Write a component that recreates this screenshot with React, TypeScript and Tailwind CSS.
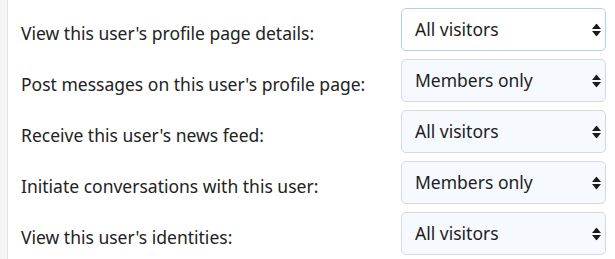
import { useState } from "react";

interface IPrivacyRow {
  label: string;
  value: string;
  focused?: boolean;
}

const options = ["All visitors", "Members only", "Followed members only", "Nobody"];

const rows: IPrivacyRow[] = [
  { label: "View this user's profile page details:", value: "All visitors", focused: true },
  { label: "Post messages on this user's profile page:", value: "Members only" },
  { label: "Receive this user's news feed:", value: "All visitors" },
  { label: "Initiate conversations with this user:", value: "Members only" },
  { label: "View this user's identities:", value: "All visitors" },
];

// bootstrap style up/down caret
const arrows = (
  <svg width={9} height={13} viewBox="0 0 9 13" className="pointer-events-none absolute right-[5px] top-1/2 -translate-y-1/2">
    <path d="M4.5 0 L9 5.5 L0 5.5 Z" fill="#1b1b1b" />
    <path d="M0 7.5 L9 7.5 L4.5 13 Z" fill="#1b1b1b" />
  </svg>
);

function PrivacySelect({ value, focused = false }: { value: string; focused?: boolean }) {
  const [selected, setSelected] = useState(value);
  return (
    <div className="relative w-[205px] shrink-0">
      <select
        value={selected}
        onChange={(e) => setSelected(e.currentTarget.value)}
        className={`h-[43px] w-full appearance-none rounded-[5px] border pl-[13px] pr-6 text-[17.5px] text-[#1d1d1d] outline-none ${
          focused ? "border-[#a9d2f3] bg-white" : "border-[#d6dade] bg-[#f6f9fd]"
        }`}
      >
        {options.map((o) => (
          <option key={o} value={o}>
            {o}
          </option>
        ))}
      </select>
      {arrows}
    </div>
  );
}

export default function App() {
  return (
    <div
      className="flex h-[259px] w-[615px] bg-white"
      style={{ fontFamily: "'Noto Sans', 'Open Sans', sans-serif" }}
    >
      <div className="w-[8px] shrink-0 border-r border-[#e4e4e4] bg-[#f5f5f5]" />
      <div className="flex flex-1 flex-col gap-[8px] pl-[13px] pr-[9px] pt-[8px]">
        {rows.map((r) => (
          <div key={r.label} className="flex items-center justify-between">
            <span className="pt-[7px] text-[17.5px] text-[#222]">{r.label}</span>
            <PrivacySelect value={r.value} focused={r.focused} />
          </div>
        ))}
      </div>
    </div>
  );
}
